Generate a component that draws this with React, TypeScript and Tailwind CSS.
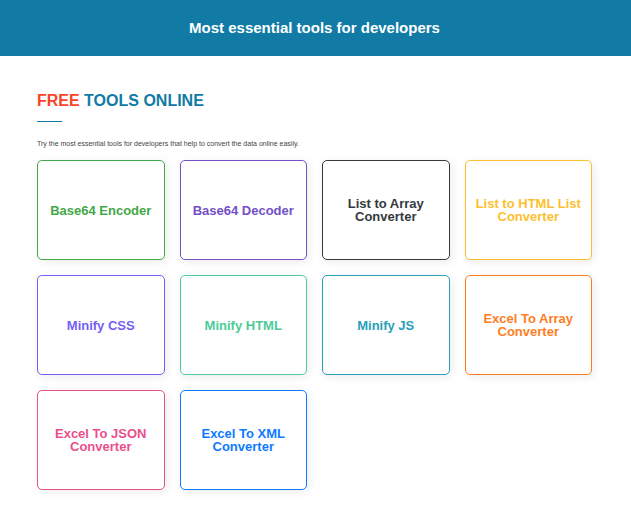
type Tool = { name: string; tone: string };

const tools: Tool[] = [
  { name: "Base64 Encoder", tone: "border-[#43a846] text-[#43a846]" },
  { name: "Base64 Decoder", tone: "border-[#7350c6] text-[#7350c6]" },
  { name: "List to Array Converter", tone: "border-[#343a40] text-[#343a40]" },
  { name: "List to HTML List Converter", tone: "border-[#fdbf2d] text-[#fdbf2d]" },
  { name: "Minify CSS", tone: "border-[#735ff5] text-[#735ff5]" },
  { name: "Minify HTML", tone: "border-[#4ccb97] text-[#4ccb97]" },
  { name: "Minify JS", tone: "border-[#28a0b8] text-[#28a0b8]" },
  { name: "Excel To Array Converter", tone: "border-[#fd7e24] text-[#fd7e24]" },
  { name: "Excel To JSON Converter", tone: "border-[#e8508c] text-[#e8508c]" },
  { name: "Excel To XML Converter", tone: "border-[#0d7bff] text-[#0d7bff]" },
];

function ToolCard({ name, tone }: Tool) {
  return (
    <a
      href="#"
      className={`flex h-[100px] items-center justify-center rounded-[5px] border bg-white px-2 text-center text-[13px] leading-[13px] font-bold shadow-[2px_2px_10px_rgba(0,0,0,0.08)] ${tone}`}
    >
      {name}
    </a>
  );
}

export default function App() {
  return (
    <div className="bg-white font-['Liberation_Sans',Arial,sans-serif]">
      <header className="bg-[#117ba6] py-[18px] pr-[39px] pl-[37px] text-center">
        <h1 className="text-[15px] leading-5 font-bold text-white">Most essential tools for developers</h1>
      </header>
      <main className="pt-[34px] pr-[39px] pb-[34px] pl-[37px]">
        <h2 className="text-base leading-[22px] font-bold text-[#117ba6]">
          <span className="text-[#f9432a]">FREE</span> TOOLS ONLINE
        </h2>
        <div className="mt-[9px] h-px w-[25px] bg-[#117ba6]" />
        <p className="mt-4 text-[7px] leading-[11px] text-[#444444]">
          Try the most essential tools for developers that help to convert the data online easily.
        </p>
        <nav aria-label="Tools" className="mt-[11px] grid grid-cols-4 gap-[15px]">
          {tools.map((tool) => (
            <ToolCard key={tool.name} {...tool} />
          ))}
        </nav>
      </main>
    </div>
  );
}
